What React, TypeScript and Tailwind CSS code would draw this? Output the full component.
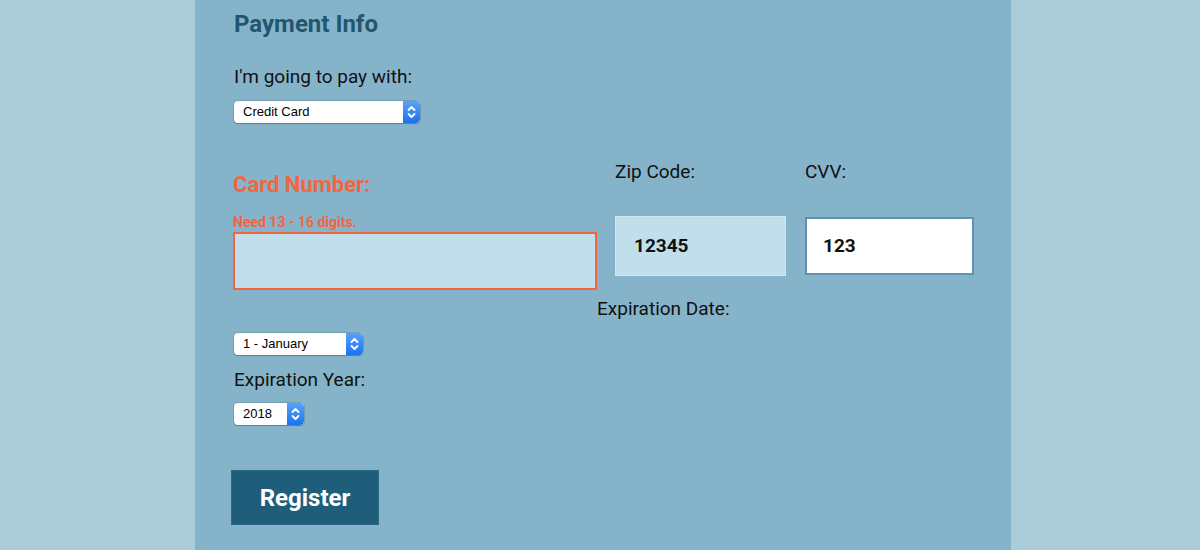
function MacSelect({ value, width }: { value: string; width: string }) {
  return (
    <div className={`flex h-[22px] ${width} rounded-[4px] bg-white shadow-[0_0_0_1px_rgba(0,0,0,0.12),0_1px_1px_rgba(0,0,0,0.2)] overflow-hidden`}>
      <div className="flex-1 flex items-center pl-[9px] text-[13px] text-black font-['Liberation_Sans',sans-serif]">{value}</div>
      <div className="w-[17px] flex items-center justify-center bg-gradient-to-b from-[#56a2fb] to-[#1a72ee] rounded-r-[4px]">
        <svg width="9" height="14" viewBox="0 0 9 14" fill="none" stroke="white" strokeWidth="1.8" strokeLinecap="round" strokeLinejoin="round">
          <path d="M1.5 5 L4.5 2 L7.5 5" />
          <path d="M1.5 9 L4.5 12 L7.5 9" />
        </svg>
      </div>
    </div>
  );
}

export default function App() {
  return (
    <div className="min-h-[550px] bg-[#abcbd7] font-['Roboto',sans-serif]">
      <div className="ml-[195px] w-[816px] min-h-[550px] bg-[#85b4ca] pl-[39px] pt-[10px]">
        <h2 className="text-[24px] font-bold text-[#22566f] leading-[28px]">Payment Info</h2>

        <div className="mt-[28px] text-[19px] leading-[22px] text-[#111]">I'm going to pay with:</div>
        <div className="mt-[13px]">
          <MacSelect value="Credit Card" width="w-[186px]" />
        </div>

        <div className="mt-[37px] flex">
          <div className="w-[364px] -ml-[1px]">
            <div className="pt-[12px] text-[22px] font-bold leading-[26px] text-[#f3653f]">Card Number:</div>
            <div className="mt-[16px] text-[14px] font-bold leading-[16px] text-[#f3653f]">Need 13 - 16 digits.</div>
            <div className="mt-[2px] h-[58px] border-2 border-[#f3653f] bg-[#c1dfea]" />
          </div>
          <div className="ml-[18px] w-[171px]">
            <div className="text-[19px] leading-[24px] text-[#111]">Zip Code:</div>
            <div className="mt-[32px] h-[60px] border border-[#d2e8f0] bg-[#c1dfea] flex items-center pl-[18px] text-[19px] font-bold text-[#111]">12345</div>
          </div>
          <div className="ml-[19px] w-[169px]">
            <div className="text-[19px] leading-[24px] text-[#111]">CVV:</div>
            <div className="mt-[33px] h-[58px] border-2 border-[#5f93ad] bg-white flex items-center pl-[16px] text-[19px] font-bold text-[#111]">123</div>
          </div>
        </div>

        <div className="mt-[8px] pl-[363px] text-[19px] leading-[22px] text-[#111]">Expiration Date:</div>
        <div className="mt-[13px]">
          <MacSelect value="1 - January" width="w-[129px]" />
        </div>

        <div className="mt-[14px] text-[19px] leading-[22px] text-[#111]">Expiration Year:</div>
        <div className="mt-[12px]">
          <MacSelect value="2018" width="w-[70px]" />
        </div>

        <button className="mt-[45px] -ml-[3px] h-[55px] w-[148px] bg-[#1f5e7a] border border-[#2b6a86] text-white text-[24px] font-bold">
          Register
        </button>
      </div>
    </div>
  );
}
